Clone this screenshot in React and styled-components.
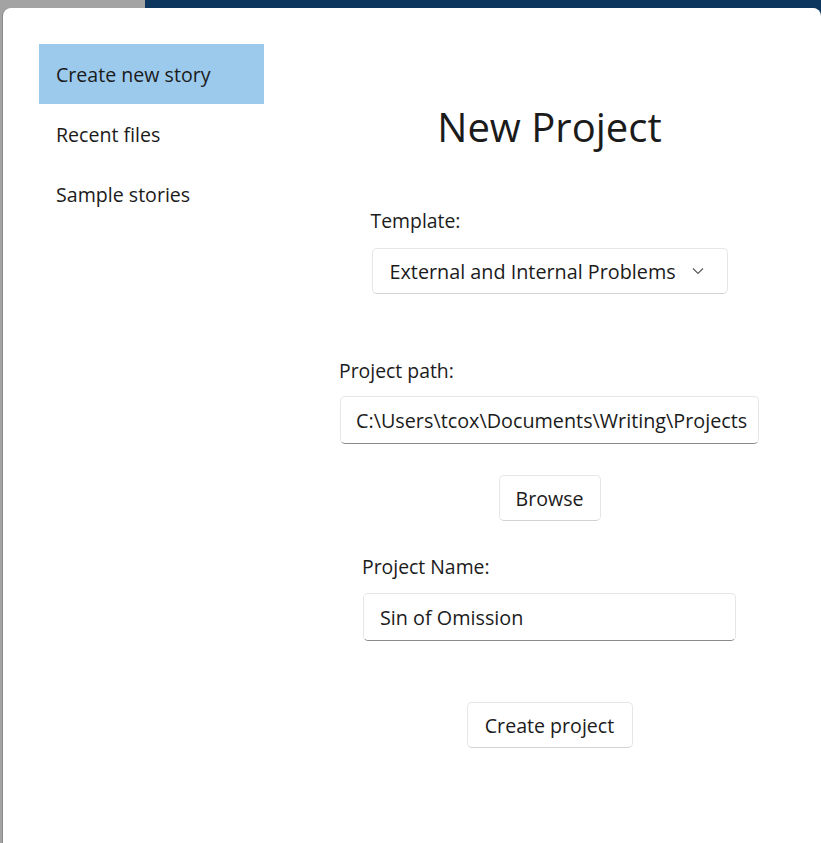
import React from "react";
import styled, { createGlobalStyle } from "styled-components";

const GlobalStyle = createGlobalStyle`
  html, body {
    margin: 0;
    padding: 0;
    height: 100%;
    overflow: hidden;
  }
  body {
    font-family: "Open Sans", "Noto Sans", sans-serif;
    color: #1b1b1b;
    background: linear-gradient(to right, #a3a3a3 0, #a3a3a3 145px, #0c365e 145px);
  }
`;

const Dialog = styled.div`
  margin: 8px 0 0 3px;
  height: 860px;
  background: #ffffff;
  border-radius: 8px 8px 0 0;
  box-shadow: -1px 0 0 #8c8c8c;
  display: grid;
  grid-template-columns: 225px 1fr;
  padding: 36px 0 0 36px;
  box-sizing: border-box;
`;

const Nav = styled.nav`
  display: flex;
  flex-direction: column;
`;

const NavItem = styled.div`
  height: 60px;
  display: flex;
  align-items: center;
  padding-left: 17px;
  font-size: 19.6px;
  background: ${(props) => (props.selected ? "#9ccaed" : "transparent")};
`;

const Content = styled.main`
  display: flex;
  flex-direction: column;
  align-items: center;
  padding-left: 14px;
`;

const Title = styled.h1`
  margin: 57px 0 0;
  font-size: 40px;
  line-height: 52px;
  font-weight: 400;
`;

const Field = styled.div`
  display: flex;
  flex-direction: column;
  align-items: flex-start;
  margin-top: ${(props) => props.top}px;
`;

const Label = styled.label`
  font-size: 19.4px;
  line-height: 24px;
  margin-left: -1px;
  margin-bottom: ${(props) => props.gap}px;
`;

const Control = styled.div`
  box-sizing: border-box;
  width: ${(props) => props.width}px;
  height: ${(props) => props.height}px;
  display: flex;
  align-items: center;
  padding: 0 ${(props) => props.pad || 16}px;
  font-size: 19.8px;
  background: #ffffff;
  border: 1px solid #e6e6e6;
  border-bottom: 1px solid ${(props) => (props.input ? "#8a8a8a" : "#d2d2d2")};
  border-radius: 5px;
  white-space: nowrap;
  overflow: hidden;
`;

const ComboText = styled.span`
  flex: 1;
`;

const Chevron = styled.svg`
  width: 12px;
  height: 8px;
  margin-right: 6px;
`;

const Button = styled.button`
  box-sizing: border-box;
  width: ${(props) => props.width}px;
  height: 46px;
  margin-top: ${(props) => props.top}px;
  font-family: inherit;
  font-size: 19.6px;
  color: #1b1b1b;
  background: #ffffff;
  border: 1px solid #e6e6e6;
  border-bottom-color: #d2d2d2;
  border-radius: 5px;
  padding: 0;
`;

export default function App() {
  return (
    <>
      <GlobalStyle />
      <Dialog>
        <Nav>
          <NavItem selected>Create new story</NavItem>
          <NavItem>Recent files</NavItem>
          <NavItem>Sample stories</NavItem>
        </Nav>
        <Content>
          <Title>New Project</Title>
          <Field top={56}>
            <Label gap={15}>Template:</Label>
            <Control width={356} height={46} pad={17}>
              <ComboText>External and Internal Problems</ComboText>
              <Chevron viewBox="0 0 12 8">
                <path
                  d="M1 1.5 L6 6.5 L11 1.5"
                  fill="none"
                  stroke="#5c5c5c"
                  strokeWidth="1.2"
                />
              </Chevron>
            </Control>
          </Field>
          <Field top={65}>
            <Label gap={13}>Project path:</Label>
            <Control width={419} height={48} pad={15} input>
              C:\Users\tcox\Documents\Writing\Projects
            </Control>
          </Field>
          <Button width={102} top={31}>
            Browse
          </Button>
          <Field top={34}>
            <Label gap={14}>Project Name:</Label>
            <Control width={373} height={48} pad={16} input>
              Sin of Omission
            </Control>
          </Field>
          <Button width={166} top={61}>
            Create project
          </Button>
        </Content>
      </Dialog>
    </>
  );
}
